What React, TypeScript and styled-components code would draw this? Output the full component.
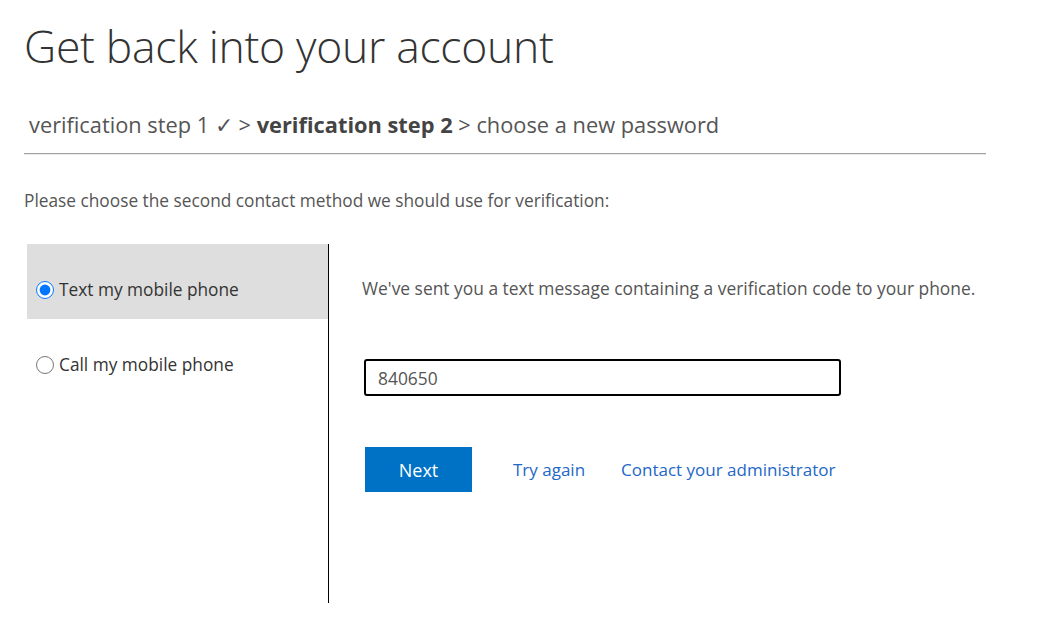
import React from "react"
import styled, { createGlobalStyle } from "styled-components"

const GlobalStyle = createGlobalStyle`
	body {
		margin: 0;
		background: #fff;
		font-family: "Open Sans", "Noto Sans", sans-serif;
		color: #333;
	}
`

const Page = styled.div`
	width: 962px;
	padding: 16px 0 0 24px;
`

const Title = styled.h1`
	margin: 0;
	font-size: 44.5px;
	font-weight: 300;
	line-height: 60px;
	color: #333;
	letter-spacing: -0.3px;
`

const Crumbs = styled.div`
	margin-top: 34px;
	padding: 0 0 13px 5px;
	font-size: 21.8px;
	line-height: 30px;
	color: #555;
	border-bottom: 1px solid #a0a0a0;
	box-shadow: 0 1px 0 #ececec;
`

const Current = styled.span`
	font-weight: 700;
	color: #444;
`

const Intro = styled.p`
	margin: 36px 0 0;
	font-size: 17.3px;
	line-height: 22px;
	color: #555;
`

const Body = styled.div`
	display: flex;
	margin-top: 32px;
	height: 359px;
`

const Options = styled.div`
	width: 301px;
	padding-left: 3px;
	border-right: 1px solid #000;
`

const Option = styled.label<{ $active?: boolean }>`
	display: flex;
	align-items: center;
	gap: 5px;
	height: 75px;
	box-sizing: border-box;
	padding: 16px 0 0 9px;
	background: ${(p) => (p.$active ? "#dedede" : "transparent")};
	font-size: 17.3px;
	color: #333;
	cursor: pointer;
`

const Radio = styled.input`
	width: 18px;
	height: 18px;
	margin: 0;
	accent-color: #0075ff;
`

const Main = styled.div`
	flex: 1;
	padding: 33px 0 0 33px;
`

const Note = styled.p`
	margin: 0;
	font-size: 17.4px;
	line-height: 22px;
	color: #555;
`

const CodeInput = styled.input`
	display: block;
	box-sizing: border-box;
	width: 477px;
	height: 37px;
	margin: 60px 0 0 2px;
	padding: 0 12px;
	border: 2px solid #000;
	border-radius: 3px;
	font-family: inherit;
	font-size: 17.4px;
	color: #555;
	outline: none;
`

const Actions = styled.div`
	display: flex;
	align-items: center;
	gap: 36px;
	margin: 51px 0 0 3px;
`

const NextButton = styled.button`
	width: 107px;
	height: 45px;
	border: none;
	background: #0072c6;
	color: #fff;
	font-family: inherit;
	font-size: 18px;
`

const Link = styled.a`
	font-size: 17px;
	color: #2367c7;
	text-decoration: none;
	margin-left: 5px;
	& + & {
		margin-left: 0;
	}
`

export default function App() {
	return (
		<>
			<GlobalStyle />
			<Page>
				<Title>Get back into your account</Title>
				<Crumbs>
					verification step 1 ✓ &gt; <Current>verification step 2</Current> &gt;
					choose a new password
				</Crumbs>
				<Intro>
					Please choose the second contact method we should use for verification:
				</Intro>
				<Body>
					<Options>
						<Option $active>
							<Radio type="radio" name="method" defaultChecked />
							Text my mobile phone
						</Option>
						<Option>
							<Radio type="radio" name="method" />
							Call my mobile phone
						</Option>
					</Options>
					<Main>
						<Note>
							We've sent you a text message containing a verification code to your
							phone.
						</Note>
						<CodeInput defaultValue="840650" />
						<Actions>
							<NextButton>Next</NextButton>
							<Link href="#">Try again</Link>
							<Link href="#">Contact your administrator</Link>
						</Actions>
					</Main>
				</Body>
			</Page>
		</>
	)
}
